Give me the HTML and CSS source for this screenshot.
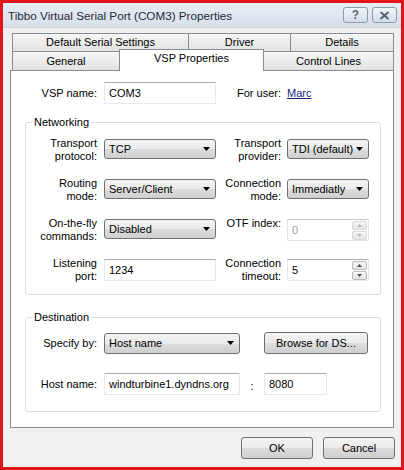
FILE: index.html
```html
<!DOCTYPE html>
<html lang="en">
<head>
    <meta charset="UTF-8">
    <title>Tibbo Virtual Serial Port (COM3) Properties</title>
    <link rel="stylesheet" href="styles.css">
</head>
<body>
    <div class="window">
        <div class="titlebar">
            <span class="title">Tibbo Virtual Serial Port (COM3) Properties</span>
            <div class="title-buttons">
                <span class="title-btn">?</span>
                <span class="title-btn">
                    <svg width="11" height="9" viewBox="0 0 11 9"><path d="M1.5 1 L9.5 8 M9.5 1 L1.5 8" stroke="#5a6673" stroke-width="2" fill="none"/></svg>
                </span>
            </div>
        </div>

        <div class="body">
            <div class="tabs">
                <div class="tab-row back">
                    <div class="tab w-default">Default Serial Settings</div>
                    <div class="tab w-driver">Driver</div>
                    <div class="tab w-details">Details</div>
                </div>
                <div class="tab-row front">
                    <div class="tab w-general">General</div>
                    <div class="tab w-vsp active">VSP Properties</div>
                    <div class="tab w-control">Control Lines</div>
                </div>
            </div>

            <div class="panel">
                <div class="top-row">
                    <label class="lbl">VSP name:</label>
                    <div class="edit">COM3</div>
                    <label class="lbl">For user:</label>
                    <a href="#" class="link">Marc</a>
                </div>

                <fieldset class="group">
                    <legend>Networking</legend>
                    <div class="net-grid">
                        <label class="lbl">Transport<br>protocol:</label>
                        <div class="combo"><span>TCP</span><svg class="arrow" width="7" height="4" viewBox="0 0 7 4"><path d="M0 0 H7 L3.5 4 Z"/></svg></div>
                        <label class="lbl">Transport<br>provider:</label>
                        <div class="combo"><span>TDI (default)</span><svg class="arrow" width="7" height="4" viewBox="0 0 7 4"><path d="M0 0 H7 L3.5 4 Z"/></svg></div>

                        <label class="lbl">Routing<br>mode:</label>
                        <div class="combo"><span>Server/Client</span><svg class="arrow" width="7" height="4" viewBox="0 0 7 4"><path d="M0 0 H7 L3.5 4 Z"/></svg></div>
                        <label class="lbl">Connection<br>mode:</label>
                        <div class="combo"><span>Immediatly</span><svg class="arrow" width="7" height="4" viewBox="0 0 7 4"><path d="M0 0 H7 L3.5 4 Z"/></svg></div>

                        <label class="lbl">On-the-fly<br>commands:</label>
                        <div class="combo"><span>Disabled</span><svg class="arrow" width="7" height="4" viewBox="0 0 7 4"><path d="M0 0 H7 L3.5 4 Z"/></svg></div>
                        <label class="lbl">OTF index:</label>
                        <div class="edit spin disabled">
                            <span>0</span>
                            <div class="spin-btns">
                                <span class="spin-btn"><svg width="5" height="3" viewBox="0 0 5 3"><path d="M0 3 H5 L2.5 0 Z"/></svg></span>
                                <span class="spin-btn"><svg width="5" height="3" viewBox="0 0 5 3"><path d="M0 0 H5 L2.5 3 Z"/></svg></span>
                            </div>
                        </div>

                        <label class="lbl">Listening<br>port:</label>
                        <div class="edit">1234</div>
                        <label class="lbl">Connection<br>timeout:</label>
                        <div class="edit spin">
                            <span>5</span>
                            <div class="spin-btns">
                                <span class="spin-btn"><svg width="5" height="3" viewBox="0 0 5 3"><path d="M0 3 H5 L2.5 0 Z"/></svg></span>
                                <span class="spin-btn"><svg width="5" height="3" viewBox="0 0 5 3"><path d="M0 0 H5 L2.5 3 Z"/></svg></span>
                            </div>
                        </div>
                    </div>
                </fieldset>

                <fieldset class="group dest">
                    <legend>Destination</legend>
                    <div class="dest-grid">
                        <label class="lbl">Specify by:</label>
                        <div class="combo"><span>Host name</span><svg class="arrow" width="7" height="4" viewBox="0 0 7 4"><path d="M0 0 H7 L3.5 4 Z"/></svg></div>
                        <span></span>
                        <button class="button">Browse for DS...</button>

                        <label class="lbl">Host name:</label>
                        <div class="edit">windturbine1.dyndns.org</div>
                        <span class="colon">:</span>
                        <div class="edit port">8080</div>
                    </div>
                </fieldset>
            </div>

            <div class="dialog-buttons">
                <button class="button">OK</button>
                <button class="button">Cancel</button>
            </div>
        </div>
    </div>
</body>
</html>
```

FILE: styles.css
```css
* {
    margin: 0;
    padding: 0;
    box-sizing: border-box;
}

body {
    font-family: "Liberation Sans", Arial, sans-serif;
    font-size: 11px;
    color: #000;
    background: #fff;
}

.window {
    width: 404px;
    height: 470px;
    border: 3px solid #e3141c;
    background: #f0f0f0;
    display: flex;
    flex-direction: column;
}

/* title bar */
.titlebar {
    height: 25px;
    display: flex;
    align-items: center;
    justify-content: space-between;
    padding: 0 4px 0 5px;
    background: linear-gradient(#e7edf4, #d7e0ea);
    border-bottom: 1px solid #cdd6df;
}

.title {
    font-size: 11.7px;
    color: #1f2a36;
}

.title-buttons {
    display: flex;
    gap: 4px;
}

.title-btn {
    width: 25px;
    height: 16px;
    display: flex;
    align-items: center;
    justify-content: center;
    border: 1px solid #8d9aa8;
    border-radius: 3px;
    background: linear-gradient(#f1f5f9, #d3dde8);
    color: #5a6673;
    font-size: 12px;
    font-weight: bold;
}

/* dialog body */
.body {
    flex: 1;
    padding: 5px 7px 0 7px;
    display: flex;
    flex-direction: column;
}

.tabs {
    margin-left: 2px;
    width: 382px;
}

.tab-row {
    display: flex;
}

.tab-row.back {
    height: 18px;
}

.tab-row.front {
    height: 19px;
}

.tab {
    border: 1px solid #898c95;
    border-bottom: none;
    background: linear-gradient(#f6f6f6, #e2e2e2);
    text-align: center;
    line-height: 17px;
    margin-left: -1px;
}

.tab:first-child {
    margin-left: 0;
}

.front .tab {
    line-height: 18px;
}

.w-default { width: 177px; }
.w-driver { width: 103px; }
.w-details { width: 104px; }
.w-general { width: 108px; }
.w-vsp { width: 145px; }
.w-control { width: 131px; }

.tab.active {
    position: relative;
    z-index: 1;
    height: 22px;
    margin-top: -2px;
    background: #fff;
    line-height: 17px;
}

.panel {
    height: 358px;
    background: #fff;
    border: 1px solid #898c95;
    padding-top: 11px;
}

.lbl {
    text-align: right;
    line-height: 13px;
    padding-right: 7px;
}

.top-row {
    display: grid;
    grid-template-columns: 93px 112px 71px auto;
    align-items: center;
}

.top-row .lbl:nth-of-type(2) {
    padding-right: 6px;
}

.link {
    color: #15287a;
    text-decoration: underline;
}

/* group boxes */
.group {
    border: 1px solid #d5dfe5;
    border-radius: 3px;
    margin: 12px 12px 0 14px;
    padding: 8px 0 11px 0;
    min-width: 0;
}

.group legend {
    margin-left: 6px;
    padding: 0 2px;
    line-height: 13px;
}

.group.dest {
    margin-top: 16px;
    padding: 8px 0 16px 0;
}

.net-grid {
    display: grid;
    grid-template-columns: 78px 112px 71px 82px;
    grid-auto-rows: 26px;
    row-gap: 14px;
    align-items: start;
}

.net-grid .lbl:nth-child(4n+3) {
    padding-right: 6px;
}

.net-grid .combo,
.net-grid .edit {
    margin-top: 2px;
}

.dest-grid {
    display: grid;
    grid-template-columns: 78px 136px 24px 104px;
    grid-template-rows: 22px 22px;
    row-gap: 19px;
    align-items: center;
}

.colon {
    text-align: center;
    padding-top: 3px;
}

/* controls */
.edit {
    height: 22px;
    display: flex;
    align-items: center;
    padding-left: 4px;
    background: #fff;
    border: 1px solid #e3e9ef;
    border-top-color: #abadb3;
}

.edit.port {
    width: 63px;
}

.combo {
    height: 20px;
    display: flex;
    align-items: center;
    justify-content: space-between;
    padding: 0 5px 0 4px;
    border: 1px solid #707070;
    border-radius: 3px;
    background: linear-gradient(#f3f3f3 0%, #ebebeb 50%, #dddddd 51%, #cfcfcf 100%);
}

.dest-grid .combo {
    height: 21px;
}

.arrow {
    fill: #000;
}

.spin {
    justify-content: space-between;
    padding-right: 1px;
}

.spin-btns {
    display: flex;
    flex-direction: column;
    gap: 1px;
}

.spin-btn {
    width: 15px;
    height: 9px;
    display: flex;
    align-items: center;
    justify-content: center;
    border: 1px solid #b9b9b9;
    border-radius: 2px;
    background: linear-gradient(#f7f7f7, #e4e4e4);
    fill: #4d4d4d;
}

.spin.disabled {
    color: #a0a0a0;
    border-color: #e0e3e6;
    border-top-color: #c4c6c9;
}

.spin.disabled .spin-btn {
    border-color: #d8d8d8;
    fill: #b4b4b4;
}

.button {
    height: 22px;
    font-family: "Liberation Sans", Arial, sans-serif;
    font-size: 11px;
    color: #000;
    border: 1px solid #707070;
    border-radius: 3px;
    background: linear-gradient(#f3f3f3 0%, #ebebeb 50%, #dddddd 51%, #cfcfcf 100%);
}

.dialog-buttons {
    display: flex;
    justify-content: flex-end;
    gap: 10px;
    margin: 9px -1px 0 0;
}

.dialog-buttons .button {
    width: 72px;
}
```
